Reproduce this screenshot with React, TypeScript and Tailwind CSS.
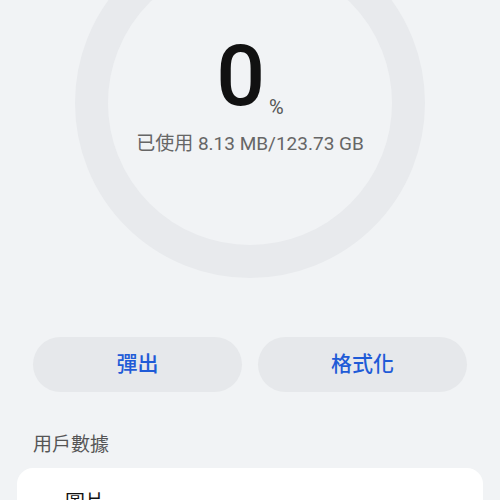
export default function App() {
  return (
    <div
      className="w-[500px] h-[500px] overflow-hidden bg-[#f1f3f5]"
      style={{ fontFamily: '"Roboto", "Noto Sans CJK TC", sans-serif' }}
    >
      {/* storage ring */}
      <div className="mx-auto mt-[-72px] w-[350px] h-[350px] rounded-full border-[33px] border-[#e8eaed] flex flex-col items-center">
        <div className="mt-[72px] flex items-end">
          <span className="text-[86px] leading-none font-medium text-[#111]">0</span>
          <span className="ml-1 mb-[2px] text-[20px] leading-none text-[#555]">%</span>
        </div>
        <div className="mt-[15px] text-[19px] leading-none text-[#666]">
          已使用 8.13 MB/123.73 GB
        </div>
      </div>

      {/* actions */}
      <div className="mt-[59px] flex gap-4 px-[33px]">
        <button className="flex-1 h-[55px] rounded-full bg-[#e6e8eb] text-[21px] font-medium text-[#1f5bd7]">
          彈出
        </button>
        <button className="flex-1 h-[55px] rounded-full bg-[#e6e8eb] text-[21px] font-medium text-[#1f5bd7]">
          格式化
        </button>
      </div>

      <div className="mt-[43px] px-[33px] text-[19px] leading-none text-[#555]">用戶數據</div>

      <div className="mt-[14px] mx-[17px] h-[80px] rounded-2xl bg-white px-[48px] pt-[25px]">
        <div className="text-[20px] leading-none text-[#111]">圖片</div>
      </div>
    </div>
  );
}
